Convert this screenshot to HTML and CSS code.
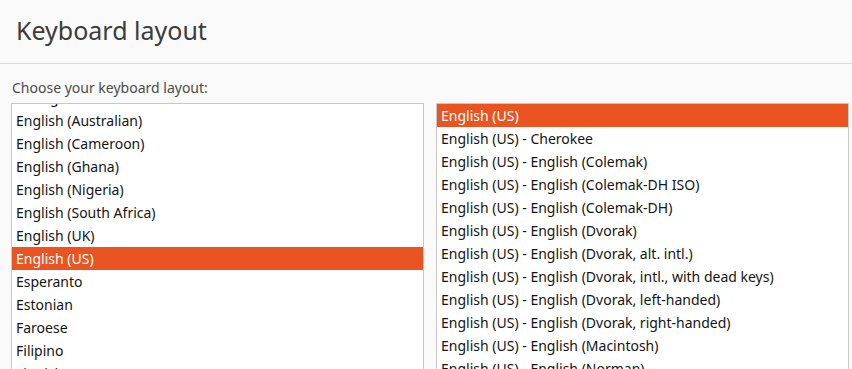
FILE: index.html
```html
<!DOCTYPE html>
<html>
<head>
<meta charset="utf-8">
<link rel="stylesheet" href="styles.css">
</head>
<body>
<header class="header">
  <h1 class="title">Keyboard layout</h1>
</header>
<main class="content">
  <div class="label">Choose your keyboard layout:</div>
  <div class="lists">
    <ul class="list list-left">
      <li class="item first-clipped">Dzongkha</li>
      <li class="item">English (Australian)</li>
      <li class="item">English (Cameroon)</li>
      <li class="item">English (Ghana)</li>
      <li class="item">English (Nigeria)</li>
      <li class="item">English (South Africa)</li>
      <li class="item">English (UK)</li>
      <li class="item selected">English (US)</li>
      <li class="item">Esperanto</li>
      <li class="item">Estonian</li>
      <li class="item">Faroese</li>
      <li class="item">Filipino</li>
      <li class="item">Finnish</li>
      <li class="item">French</li>
    </ul>
    <ul class="list list-right">
      <li class="item selected">English (US)</li>
      <li class="item">English (US) - Cherokee</li>
      <li class="item">English (US) - English (Colemak)</li>
      <li class="item">English (US) - English (Colemak-DH ISO)</li>
      <li class="item">English (US) - English (Colemak-DH)</li>
      <li class="item">English (US) - English (Dvorak)</li>
      <li class="item">English (US) - English (Dvorak, alt. intl.)</li>
      <li class="item">English (US) - English (Dvorak, intl., with dead keys)</li>
      <li class="item">English (US) - English (Dvorak, left-handed)</li>
      <li class="item">English (US) - English (Dvorak, right-handed)</li>
      <li class="item">English (US) - English (Macintosh)</li>
      <li class="item">English (US) - English (Norman)</li>
      <li class="item">English (US) - English (Workman)</li>
    </ul>
  </div>
</main>
</body>
</html>
```
FILE: styles.css
```css
html, body {
  margin: 0;
  padding: 0;
  background: #fafafa;
  height: 100%;
  overflow: hidden;
}
body {
  font-family: "Noto Sans", "DejaVu Sans", sans-serif;
  color: #3d3d3d;
}
.header {
  height: 64px;
  border-bottom: 1px solid #dadada;
  box-sizing: border-box;
  display: flex;
  align-items: center;
  padding-left: 16px;
  padding-bottom: 3px;
}
.title {
  margin: 0;
  font-size: 25px;
  font-weight: 400;
  color: #3c3c3c;
}
.content {
  padding: 15px 0 0 12px;
}
.label {
  font-size: 14px;
  line-height: 18px;
  color: #4a4a4a;
  margin-bottom: 6px;
}
.lists {
  display: grid;
  grid-template-columns: 413px 413px;
  column-gap: 12px;
  margin-left: -1px;
}
.list {
  list-style: none;
  margin: 0;
  padding: 0;
  background: #fff;
  border: 1px solid #cdc7c2;
  height: 300px;
  overflow: hidden;
}
.item {
  height: 23px;
  line-height: 23px;
  padding-left: 4px;
  font-size: 14px;
  color: #141414;
  white-space: nowrap;
}
.first-clipped {
  margin-top: -18px;
}
.selected {
  background: #e95420;
  color: #fff;
}
```
